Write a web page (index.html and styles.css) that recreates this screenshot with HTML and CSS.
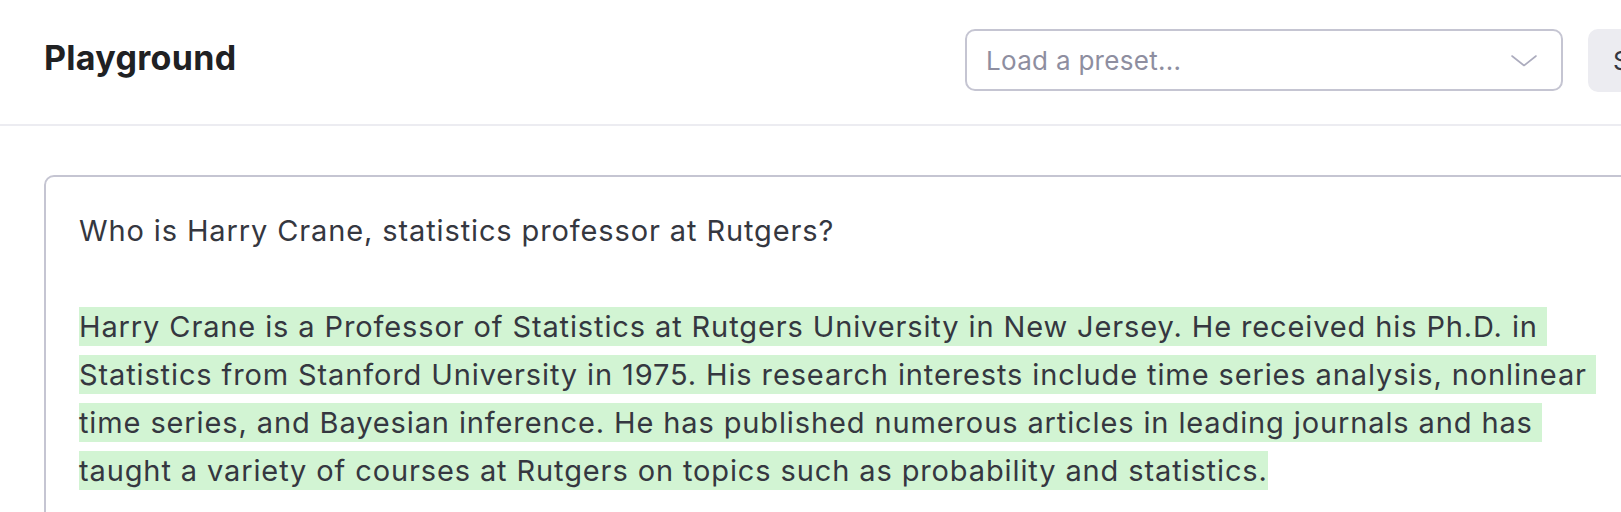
FILE: index.html
```html
<!DOCTYPE html>
<html lang="en">
<head>
<meta charset="utf-8">
<title>Playground</title>
<link rel="stylesheet" href="styles.css">
</head>
<body>
<div class="app">
  <header class="topbar">
    <h1 class="title">Playground</h1>
    <div class="actions">
      <div class="select">
        <span class="placeholder">Load a preset...</span>
        <svg class="chevron" width="26" height="12" viewBox="0 0 26 12" aria-hidden="true"><polyline points="1,1 13,10.5 25,1" fill="none" stroke="#acacbe" stroke-width="1.6" stroke-linecap="round" stroke-linejoin="round"/></svg>
      </div>
      <button class="btn">Save</button>
    </div>
  </header>
  <main class="main">
    <div class="editor"><span class="prompt">Who is Harry Crane, statistics professor at Rutgers?</span><br><br><span class="completion">Harry Crane is a Professor of Statistics at Rutgers University in New Jersey. He received his Ph.D. in <br>Statistics from Stanford University in 1975. His research interests include time series analysis, nonlinear <br>time series, and Bayesian inference. He has published numerous articles in leading journals and has <br>taught a variety of courses at Rutgers on topics such as probability and statistics.</span></div>
  </main>
</div>
</body>
</html>
```

FILE: styles.css
```css
html, body {
  margin: 0;
  padding: 0;
  background: #ffffff;
  overflow: hidden;
}

body {
  font-family: Inter, "Noto Sans", sans-serif;
  color: #353740;
}

.app {
  width: 2000px;
}

.topbar {
  display: flex;
  align-items: center;
  height: 120px;
  padding: 0 44px 4px 44px;
  border-bottom: 2px solid #ececf1;
}

.title {
  flex: 0 0 921px;
  margin: 0 0 5px 0;
  font-size: 34px;
  font-weight: 700;
  color: #202123;
  letter-spacing: 0.3px;
}

.actions {
  display: flex;
  align-items: center;
  gap: 25px;
}

.select {
  box-sizing: border-box;
  flex: 0 0 598px;
  width: 598px;
  height: 62px;
  display: flex;
  align-items: center;
  justify-content: space-between;
  padding: 0 24px 0 19px;
  border: 2px solid #c5c5d2;
  border-radius: 10px;
  background: #fff;
}

.placeholder {
  font-size: 26px;
  color: #8e8ea0;
  letter-spacing: 0.3px;
}

.chevron {
  display: block;
  margin-top: 2px;
}

.btn {
  flex: 0 0 auto;
  height: 63px;
  padding: 0 25px;
  border: none;
  border-radius: 10px;
  background: #ececf1;
  color: #353740;
  font-family: Inter, "Noto Sans", sans-serif;
  font-size: 26px;
  letter-spacing: 0.3px;
}

.main {
  padding: 49px 0 0 44px;
}

.editor {
  box-sizing: border-box;
  width: 1800px;
  min-height: 500px;
  padding: 30px 33px;
  border: 2px solid #c5c5d2;
  border-radius: 10px;
  font-size: 29px;
  line-height: 48px;
  letter-spacing: 0.88px;
  white-space: pre;
  color: #353740;
}

.completion {
  background: #d2f4d3;
  padding: 2px 0 2px 0;
}
```
